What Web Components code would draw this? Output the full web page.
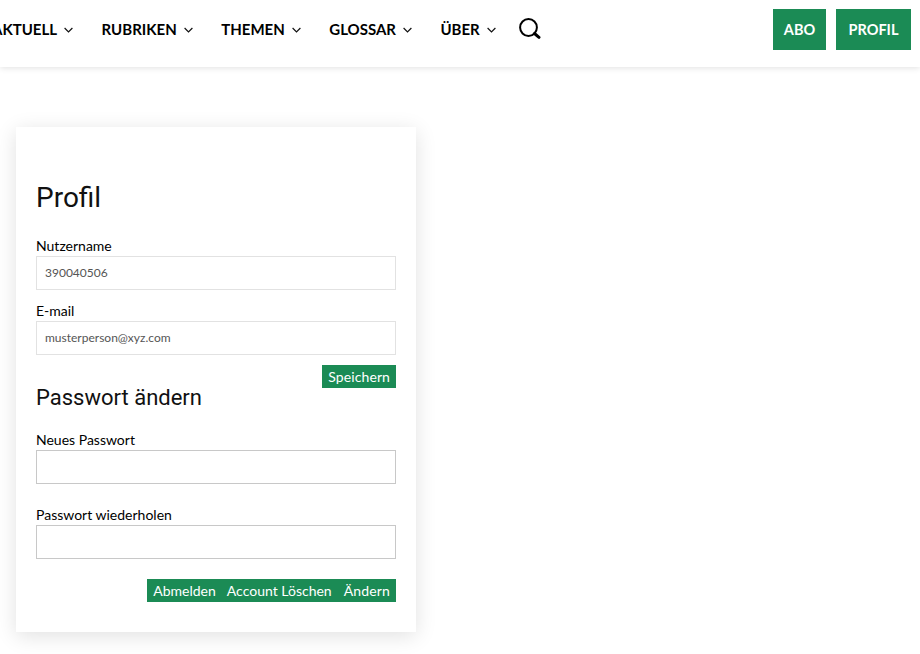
<!DOCTYPE html>
<html lang="de">
<head>
<meta charset="utf-8">
<title>Profil</title>
<style>
  html, body { margin: 0; padding: 0; background: #fff; }
  body { font-family: "Lato", sans-serif; overflow: hidden; height: 654px; }
</style>
</head>
<body>
<site-header>
  <nav-item>AKTUELL</nav-item>
  <nav-item>RUBRIKEN</nav-item>
  <nav-item>THEMEN</nav-item>
  <nav-item>GLOSSAR</nav-item>
  <nav-item>ÜBER</nav-item>
  <header-button slot="actions" style="width:53px">ABO</header-button>
  <header-button slot="actions" style="width:75px">PROFIL</header-button>
</site-header>
<profile-card>
  <h-title level="1">Profil</h-title>
  <form-field label="Nutzername" value="390040506" readonly></form-field>
  <form-field label="E-mail" value="musterperson@xyz.com" readonly></form-field>
  <button-row><green-button style="letter-spacing:.1px">Speichern</green-button></button-row>
  <h-title level="2">Passwort ändern</h-title>
  <form-field label="Neues Passwort" type="password"></form-field>
  <form-field label="Passwort wiederholen" type="password"></form-field>
  <button-row>
    <green-button style="padding-right:5px">Abmelden</green-button>
    <green-button>Account Löschen</green-button>
    <green-button style="letter-spacing:.15px">Ändern</green-button>
  </button-row>
</profile-card>
<script>
  class SiteHeader extends HTMLElement {
    constructor() {
      super();
      const shadow = this.attachShadow({mode: 'open'});
      shadow.innerHTML = `<style>
  :host { display: flex; align-items: flex-start; height: 67px; background: #fff; box-shadow: 0 1px 6px rgba(0,0,0,.12); overflow: hidden; position: relative; }
  #nav { display: flex; align-items: center; gap: 28.5px; margin-left: -8px; margin-top: 18px; height: 21px; }
  #search { display: block; margin-left: -5px; margin-top: -1px; }
  #actions { display: flex; gap: 10px; margin-left: auto; margin-right: 9px; margin-top: 9px; }
</style>
<div id="nav">
  <slot></slot>
  <svg id="search" width="22" height="21" viewBox="0 0 22 21" fill="none" stroke="#000">
    <circle cx="9.5" cy="9.5" r="8.4" stroke-width="2"/>
    <path d="M15.5 15.5 L20 19.3" stroke-width="3" stroke-linecap="round"/>
  </svg>
</div>
<div id="actions"><slot name="actions"></slot></div>`;
    }
  }
  customElements.define('site-header', SiteHeader);

  class NavItem extends HTMLElement {
    constructor() {
      super();
      const shadow = this.attachShadow({mode: 'open'});
      shadow.innerHTML = `<style>
  :host { display: flex; align-items: center; gap: 7px; font: 700 15px/20px "Lato", sans-serif; color: #000; }
  svg { display: block; margin-top: 2px; }
</style>
<slot></slot>
<svg width="9" height="6" viewBox="0 0 9 6" fill="none" stroke="#111" stroke-width="1.2"><path d="M.6 1 L4.5 4.9 L8.4 1"/></svg>`;
    }
  }
  customElements.define('nav-item', NavItem);

  class HeaderButton extends HTMLElement {
    constructor() {
      super();
      const shadow = this.attachShadow({mode: 'open'});
      shadow.innerHTML = `<style>
  :host { display: flex; align-items: center; justify-content: center; box-sizing: border-box; height: 41px; background: #1b8b55; color: #fff; font: 700 14.5px/20px "Lato", sans-serif; }
</style>
<slot></slot>`;
    }
  }
  customElements.define('header-button', HeaderButton);

  class ProfileCard extends HTMLElement {
    constructor() {
      super();
      const shadow = this.attachShadow({mode: 'open'});
      shadow.innerHTML = `<style>
  :host { display: block; box-sizing: border-box; width: 400px; height: 505px; margin: 60px 0 0 16px; padding: 52px 20px 0; background: #fff; box-shadow: 0 4px 20px rgba(0,0,0,.12); }
</style>
<slot></slot>`;
    }
  }
  customElements.define('profile-card', ProfileCard);

  class HTitle extends HTMLElement {
    constructor() {
      super();
      const shadow = this.attachShadow({mode: 'open'});
      const big = this.getAttribute('level') === '1';
      shadow.innerHTML = `<style>
  :host { display: block; font-family: "Roboto", sans-serif; font-weight: 400; color: #111; font-size: ${big ? 28 : 22}px; line-height: ${big ? 38 : 28}px; margin-top: ${big ? 0 : -4}px; margin-bottom: ${big ? 18 : 17}px; }
</style>
<slot></slot>`;
    }
  }
  customElements.define('h-title', HTitle);

  class FormField extends HTMLElement {
    constructor() {
      super();
      const shadow = this.attachShadow({mode: 'open'});
      const isPw = this.getAttribute('type') === 'password';
      const ro = this.hasAttribute('readonly');
      shadow.innerHTML = `<style>
  :host { display: block; margin-bottom: ${isPw ? 20 : 10}px; }
  label { display: block; font: 400 14px/21px "Lato", sans-serif; color: #000; height: 21px; margin-bottom: 0; }
  input { display: block; box-sizing: border-box; width: 100%; height: 34px; margin: 0; padding: 0 8px 2px; background: #fff; border: 1px solid ${ro ? '#e2e2e2' : '#c8c8c8'}; border-radius: 0; outline: none; color: #555; font: 400 12px "Lato", sans-serif; }
</style>
<label></label><input>`;
      shadow.querySelector('label').textContent = this.getAttribute('label');
      const input = shadow.querySelector('input');
      input.type = isPw ? 'password' : 'text';
      input.value = this.getAttribute('value') || '';
      input.readOnly = ro;
    }
  }
  customElements.define('form-field', FormField);

  class ButtonRow extends HTMLElement {
    constructor() {
      super();
      const shadow = this.attachShadow({mode: 'open'});
      shadow.innerHTML = `<style>
  :host { display: flex; justify-content: flex-end; }
</style>
<slot></slot>`;
    }
  }
  customElements.define('button-row', ButtonRow);

  class GreenButton extends HTMLElement {
    constructor() {
      super();
      const shadow = this.attachShadow({mode: 'open'});
      shadow.innerHTML = `<style>
  :host { display: block; padding: 0 6px; height: 23px; background: #1b8b55; color: #fff; font: 400 14px/24px "Lato", sans-serif; }
</style>
<slot></slot>`;
    }
  }
  customElements.define('green-button', GreenButton);
</script>
</body>
</html>
